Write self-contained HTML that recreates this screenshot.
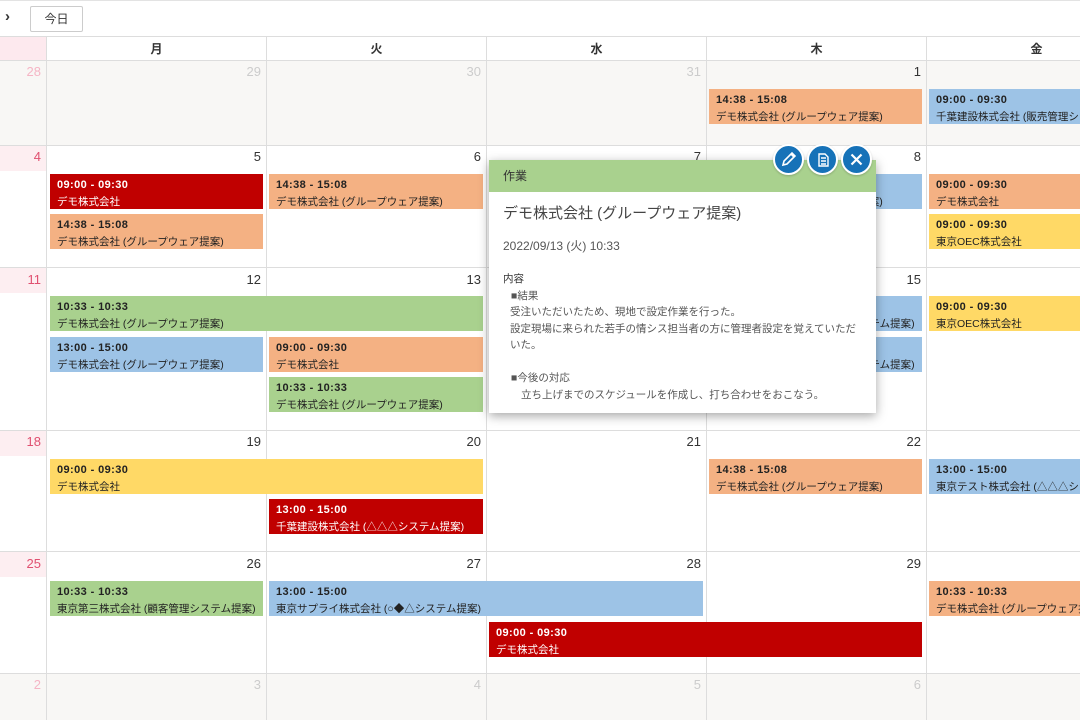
<!DOCTYPE html>
<html><head><meta charset="utf-8"><style>
*{margin:0;padding:0;box-sizing:border-box}
body{width:1080px;height:720px;overflow:hidden;background:#fff;font-family:"Liberation Sans","Noto Sans CJK JP",sans-serif;color:#333;position:relative}
.a{position:absolute}
.vl{position:absolute;top:37px;bottom:0;width:1px;background:#ddd}
.hl{position:absolute;left:0;right:0;height:1px;background:#ddd}
.d{position:absolute;font-size:13px;color:#333;text-align:right;width:30px}
.g{color:#ccc}
.ev{position:absolute;height:35px;font-size:10.5px;padding:3px 0 0 7px;line-height:17px;white-space:nowrap;overflow:hidden;color:#222}
.ev b{display:block;font-weight:bold;font-size:11px;letter-spacing:0.4px}
.r{background:#c00000;color:#fff}
.o{background:#f4b183}
.b{background:#9dc3e6}
.gr{background:#a9d18e}
.y{background:#ffd966}
.btn{position:absolute;top:144px;width:31px;height:31px;border-radius:50%;background:#1672b8;border:2px solid #fff;box-shadow:0 1px 2px rgba(0,0,0,.2)}
</style></head><body>
<div class="hl" style="top:0;background:#e3e3e3"></div>
<div class="a" style="left:5px;top:8px;font-size:15px;font-weight:bold">›</div>
<div class="a" style="left:30px;top:6px;width:53px;height:26px;border:1px solid #ccc;border-radius:2px;font-size:12px;text-align:center;line-height:24px">今日</div>
<div class="hl" style="top:36px"></div>
<div class="a" style="left:0;top:37px;width:46px;height:23px;background:#fde9ee"></div>
<div class="a" style="left:0;top:60px;width:1080px;height:85px;background:#f8f7f5"></div>
<div class="a" style="left:0;top:673px;width:1080px;height:47px;background:#f8f7f5"></div>
<div class="a" style="left:0;top:146px;width:46px;height:25px;background:#fdeef1"></div>
<div class="a" style="left:0;top:268px;width:46px;height:25px;background:#fdeef1"></div>
<div class="a" style="left:0;top:431px;width:46px;height:25px;background:#fdeef1"></div>
<div class="a" style="left:0;top:552px;width:46px;height:25px;background:#fdeef1"></div>
<div class="vl" style="left:46px"></div><div class="vl" style="left:266px"></div><div class="vl" style="left:486px"></div><div class="vl" style="left:706px"></div><div class="vl" style="left:926px"></div>
<div class="hl" style="top:60px"></div><div class="hl" style="top:145px"></div><div class="hl" style="top:267px"></div><div class="hl" style="top:430px"></div><div class="hl" style="top:551px"></div><div class="hl" style="top:673px"></div>
<div class="a" style="top:40px;left:47px;width:219px;text-align:center;font-size:12px;font-weight:bold">月</div>
<div class="a" style="top:40px;left:267px;width:219px;text-align:center;font-size:12px;font-weight:bold">火</div>
<div class="a" style="top:40px;left:487px;width:219px;text-align:center;font-size:12px;font-weight:bold">水</div>
<div class="a" style="top:40px;left:707px;width:219px;text-align:center;font-size:12px;font-weight:bold">木</div>
<div class="a" style="top:40px;left:927px;width:219px;text-align:center;font-size:12px;font-weight:bold">金</div>
<div class="d" style="left:11px;top:64px;color:#f5b5c5">28</div><div class="d g" style="left:231px;top:64px">29</div><div class="d g" style="left:451px;top:64px">30</div><div class="d g" style="left:671px;top:64px">31</div><div class="d" style="left:891px;top:64px">1</div>
<div class="d" style="left:11px;top:149px;color:#e05070">4</div><div class="d" style="left:231px;top:149px">5</div><div class="d" style="left:451px;top:149px">6</div><div class="d" style="left:671px;top:149px">7</div><div class="d" style="left:891px;top:149px">8</div>
<div class="d" style="left:11px;top:272px;color:#e05070">11</div><div class="d" style="left:231px;top:272px">12</div><div class="d" style="left:451px;top:272px">13</div><div class="d" style="left:891px;top:272px">15</div>
<div class="d" style="left:11px;top:434px;color:#e05070">18</div><div class="d" style="left:231px;top:434px">19</div><div class="d" style="left:451px;top:434px">20</div><div class="d" style="left:671px;top:434px">21</div><div class="d" style="left:891px;top:434px">22</div>
<div class="d" style="left:11px;top:556px;color:#e05070">25</div><div class="d" style="left:231px;top:556px">26</div><div class="d" style="left:451px;top:556px">27</div><div class="d" style="left:671px;top:556px">28</div><div class="d" style="left:891px;top:556px">29</div>
<div class="d" style="left:11px;top:677px;color:#f5b5c5">2</div><div class="d g" style="left:231px;top:677px">3</div><div class="d g" style="left:451px;top:677px">4</div><div class="d g" style="left:671px;top:677px">5</div><div class="d g" style="left:891px;top:677px">6</div>
<div class="ev o" style="left:709px;top:89px;width:213px"><b>14:38 - 15:08</b>デモ株式会社 (グループウェア提案)</div>
<div class="ev b" style="left:929px;top:89px;width:151px"><b>09:00 - 09:30</b>千葉建設株式会社 (販売管理システム提案)</div>
<div class="ev r" style="left:50px;top:174px;width:213px"><b>09:00 - 09:30</b>デモ株式会社</div>
<div class="ev o" style="left:50px;top:214px;width:213px"><b>14:38 - 15:08</b>デモ株式会社 (グループウェア提案)</div>
<div class="ev o" style="left:269px;top:174px;width:214px"><b>14:38 - 15:08</b>デモ株式会社 (グループウェア提案)</div>
<div class="ev b" style="left:709px;top:174px;width:213px"><b>10:33 - 10:33</b>デモ株式会社 (グループウェア提案)</div>
<div class="ev o" style="left:929px;top:174px;width:151px"><b>09:00 - 09:30</b>デモ株式会社</div>
<div class="ev y" style="left:929px;top:214px;width:151px"><b>09:00 - 09:30</b>東京OEC株式会社</div>
<div class="ev gr" style="left:50px;top:296px;width:433px"><b>10:33 - 10:33</b>デモ株式会社 (グループウェア提案)</div>
<div class="ev b" style="left:50px;top:337px;width:213px"><b>13:00 - 15:00</b>デモ株式会社 (グループウェア提案)</div>
<div class="ev o" style="left:269px;top:337px;width:214px"><b>09:00 - 09:30</b>デモ株式会社</div>
<div class="ev gr" style="left:269px;top:377px;width:214px"><b>10:33 - 10:33</b>デモ株式会社 (グループウェア提案)</div>
<div class="ev b" style="left:709px;top:296px;width:213px"><b>13:00 - 15:00</b>東京テスト株式会社 (△△△システム提案)</div>
<div class="ev b" style="left:709px;top:337px;width:213px"><b>13:00 - 15:00</b>東京テスト株式会社 (△△△システム提案)</div>
<div class="ev y" style="left:929px;top:296px;width:151px"><b>09:00 - 09:30</b>東京OEC株式会社</div>
<div class="ev y" style="left:50px;top:459px;width:433px"><b>09:00 - 09:30</b>デモ株式会社</div>
<div class="ev r" style="left:269px;top:499px;width:214px"><b>13:00 - 15:00</b>千葉建設株式会社 (△△△システム提案)</div>
<div class="ev o" style="left:709px;top:459px;width:213px"><b>14:38 - 15:08</b>デモ株式会社 (グループウェア提案)</div>
<div class="ev b" style="left:929px;top:459px;width:151px"><b>13:00 - 15:00</b>東京テスト株式会社 (△△△システム提案)</div>
<div class="ev gr" style="left:50px;top:581px;width:213px"><b>10:33 - 10:33</b>東京第三株式会社 (顧客管理システム提案)</div>
<div class="ev b" style="left:269px;top:581px;width:434px"><b>13:00 - 15:00</b>東京サプライ株式会社 (○◆△システム提案)</div>
<div class="ev r" style="left:489px;top:622px;width:433px"><b>09:00 - 09:30</b>デモ株式会社</div>
<div class="ev o" style="left:929px;top:581px;width:151px"><b>10:33 - 10:33</b>デモ株式会社 (グループウェア提案)</div>
<div class="a" style="left:489px;top:160px;width:387px;height:253px;background:#fff;box-shadow:0 3px 10px rgba(0,0,0,.35)">
<div style="height:32px;background:#a9d18e;font-size:12px;padding:7px 0 0 14px;color:#333">作業</div>
<div style="font-size:15px;color:#444;padding:10px 0 0 14px">デモ株式会社 (グループウェア提案)</div>
<div style="font-size:12px;color:#555;padding:14px 0 0 14px">2022/09/13 (火) 10:33</div>
<div style="font-size:10.5px;color:#333;padding:17px 0 0 14px;line-height:16.5px">内容<br>
<div style="color:#555;padding-left:8px">■結果</div>
<div style="color:#555;padding-left:7px">受注いただいたため、現地で設定作業を行った。<br>設定現場に来られた若手の情シス担当者の方に管理者設定を覚えていただ<br>いた。<br><br></div>
<div style="color:#555;padding-left:8px">■今後の対応</div>
<div style="color:#555;padding-left:18px">立ち上げまでのスケジュールを作成し、打ち合わせをおこなう。</div>
</div></div>
<div class="btn" style="left:773px"><svg width="27" height="27" viewBox="0 0 27 27"><path d="M8 19l1-4 8-8 3 3-8 8z M16 8l3 3" fill="none" stroke="#fff" stroke-width="1.6"/></svg></div>
<div class="btn" style="left:807px"><svg width="27" height="27" viewBox="0 0 27 27"><path d="M10 8h6l3 3v9h-9z M12 12h5M12 15h5M12 18h5" fill="none" stroke="#fff" stroke-width="1.4"/></svg></div>
<div class="btn" style="left:841px"><svg width="27" height="27" viewBox="0 0 27 27"><path d="M8.5 8.5l10 10M18.5 8.5l-10 10" stroke="#fff" stroke-width="2.2"/></svg></div>
</body></html>
